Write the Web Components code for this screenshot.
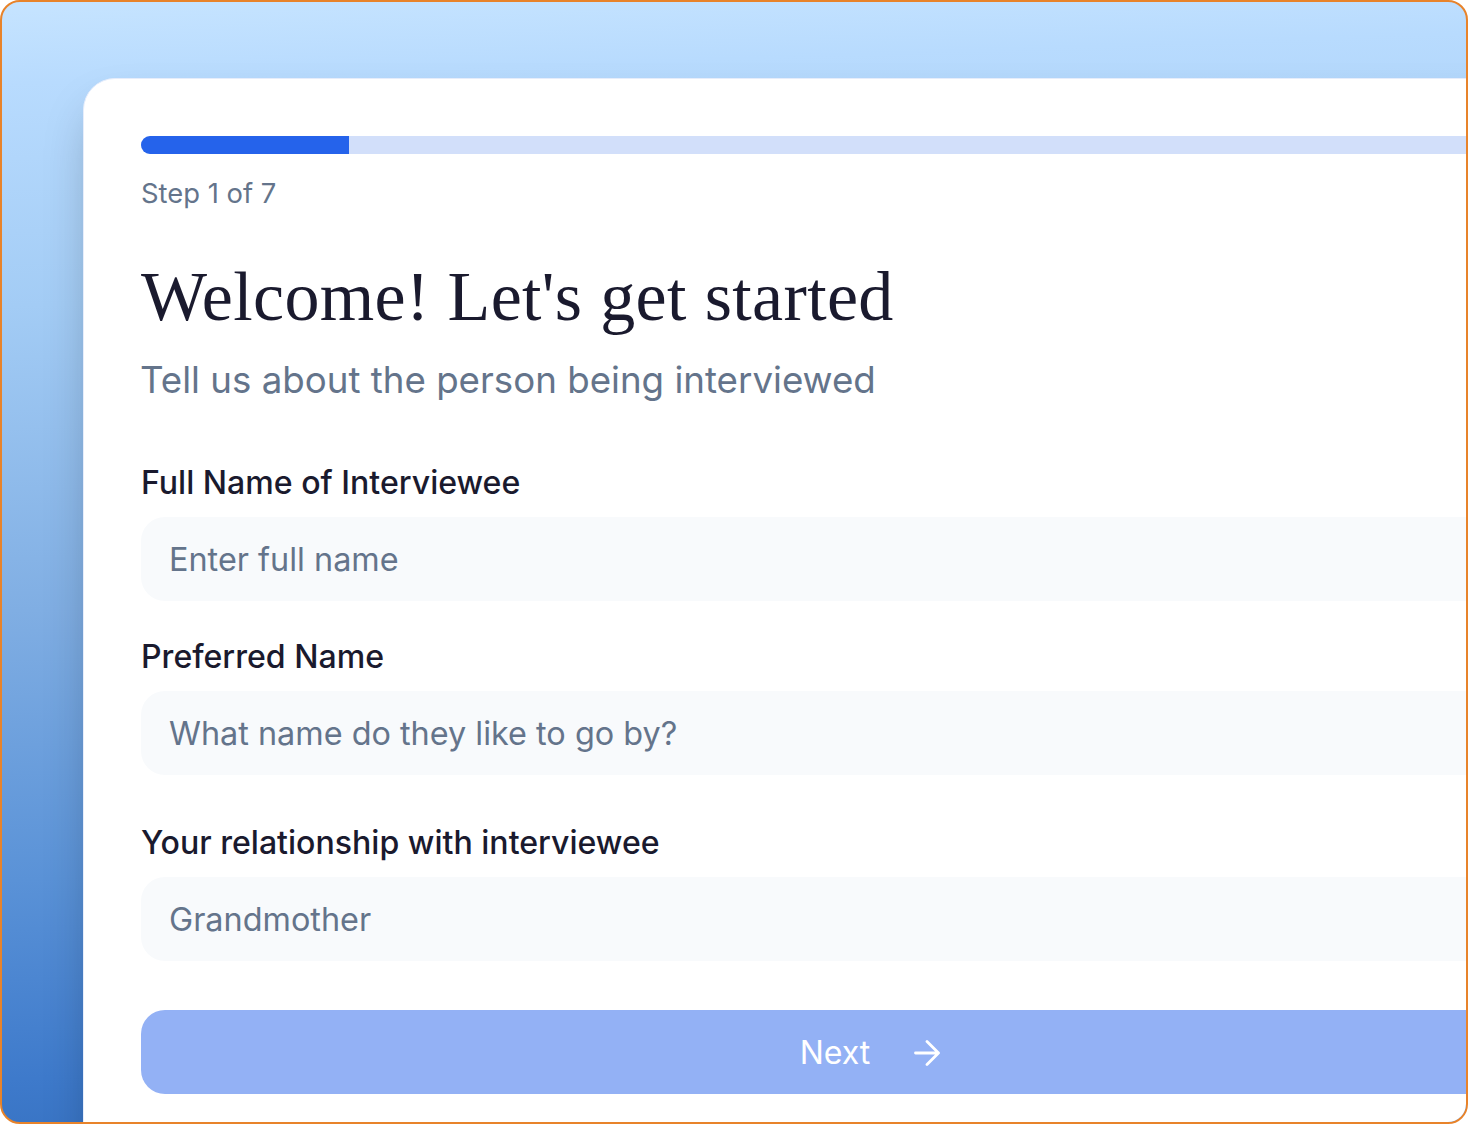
<!DOCTYPE html>
<html>
<head>
<meta charset="utf-8">
<title>Welcome</title>
<style>
  html, body { margin: 0; padding: 0; background: #fff; }
  body { width: 1468px; height: 1124px; overflow: hidden; }
</style>
</head>
<body>
<app-frame>
  <wizard-card>
    <step-progress step="1" total="7"></step-progress>
    <intro-heading subtitle="Tell us about the person being interviewed">Welcome! Let's get started</intro-heading>
    <form-field label="Full Name of Interviewee">Enter full name</form-field>
    <form-field label="Preferred Name" style="--field-top: 36px">What name do they like to go by?</form-field>
    <form-field label="Your relationship with interviewee" style="--field-top: 48px">Grandmother</form-field>
    <next-button>Next</next-button>
  </wizard-card>
</app-frame>
<script>
const SANS = `Inter, "Noto Sans", sans-serif`

class AppFrame extends HTMLElement{
    constructor(){
        super()
        this.attachShadow({mode : 'open'})
        this.shadowRoot.innerHTML = `
            <style>
                :host{
                    display: block;
                    box-sizing: border-box;
                    width: 1468px;
                    height: 1124px;
                    border: 2px solid #e8832a;
                    border-radius: 20px;
                    overflow: hidden;
                    background: linear-gradient(178deg, #c6e4ff 0%, #b8dbfe 7%, #a3ccf5 26%, #80aee3 52%, #5a92d7 75%, #3e7acb 92%, #3570c0 100%);
                    padding: 76px 0 0 81px;
                }
            </style>
            <slot></slot>
        `
    }
}

class WizardCard extends HTMLElement{
    constructor(){
        super()
        this.attachShadow({mode : 'open'})
        this.shadowRoot.innerHTML = `
            <style>
                :host{
                    display: flex;
                    flex-direction: column;
                    box-sizing: border-box;
                    width: 1572px;
                    height: 1200px;
                    padding: 57px 57px 0;
                    background: #fff;
                    border: 1px solid #e6edfb;
                    border-radius: 32px;
                    box-shadow: 0 25px 50px -12px rgba(0,0,0,.28);
                }
            </style>
            <slot></slot>
        `
    }
}

class StepProgress extends HTMLElement{
    constructor(){
        super()
        this.attachShadow({mode : 'open'})
    }
    connectedCallback(){
        const step = this.getAttribute('step')
        const total = this.getAttribute('total')
        this.shadowRoot.innerHTML = `
            <style>
                :host{ display: block; }
                .track{
                    height: 18px;
                    background: #d2dffa;
                    border-radius: 9px;
                    overflow: hidden;
                }
                .fill{
                    height: 100%;
                    width: ${step / total * 100}%;
                    background: #2563eb;
                }
                .label{
                    margin-top: 22px;
                    font: 400 27.4px/34px ${SANS};
                    color: #64748b;
                }
            </style>
            <div class="track"><div class="fill"></div></div>
            <div class="label">Step ${step} of ${total}</div>
        `
    }
}

class IntroHeading extends HTMLElement{
    constructor(){
        super()
        this.attachShadow({mode : 'open'})
    }
    connectedCallback(){
        this.shadowRoot.innerHTML = `
            <style>
                :host{ display: block; margin-top: 47px; }
                h1{
                    margin: 0;
                    font: 400 70px/80px "Liberation Serif", serif;
                    letter-spacing: .35px;
                    color: #1a1a2e;
                }
                p{
                    margin: 19px 0 0 -1px;
                    font: 400 36.7px/48px ${SANS};
                    color: #64748b;
                }
            </style>
            <h1><slot></slot></h1>
            <p>${this.getAttribute('subtitle')}</p>
        `
    }
}

class FormField extends HTMLElement{
    constructor(){
        super()
        this.attachShadow({mode : 'open'})
    }
    connectedCallback(){
        this.shadowRoot.innerHTML = `
            <style>
                :host{ display: block; margin-top: var(--field-top, 59px); }
                .label{
                    font: 500 32.1px/40px ${SANS};
                    color: #1a1a2e;
                    margin-bottom: 14px;
                }
                .input{
                    box-sizing: border-box;
                    height: 84px;
                    display: flex;
                    align-items: center;
                    padding: 2px 28px 0;
                    background: #f8fafc;
                    border-radius: 24px;
                    font: 400 32.4px/40px ${SANS};
                    color: #64748b;
                }
            </style>
            <div class="label">${this.getAttribute('label')}</div>
            <div class="input"><slot></slot></div>
        `
    }
}

class NextButton extends HTMLElement{
    constructor(){
        super()
        this.attachShadow({mode : 'open'})
        this.shadowRoot.innerHTML = `
            <style>
                :host{
                    display: flex;
                    align-items: center;
                    justify-content: center;
                    gap: 44px;
                    box-sizing: border-box;
                    height: 84px;
                    margin-top: 49px;
                    padding: 1px 0 0 2px;
                    background: #93b1f5;
                    border-radius: 24px;
                    font: 400 32px/40px ${SANS};
                    color: #fff;
                }
                svg{ display: block; }
            </style>
            <slot></slot>
            <svg width="26" height="28" viewBox="0 0 26 28" fill="none" stroke="#fff" stroke-width="2.8" stroke-linecap="round" stroke-linejoin="round">
                <path d="M1.5 14H24.5M13 2.5 24.5 14 13 25.5"/>
            </svg>
        `
    }
}

customElements.define('app-frame', AppFrame)
customElements.define('wizard-card', WizardCard)
customElements.define('step-progress', StepProgress)
customElements.define('intro-heading', IntroHeading)
customElements.define('form-field', FormField)
customElements.define('next-button', NextButton)
</script>
</body>
</html>
